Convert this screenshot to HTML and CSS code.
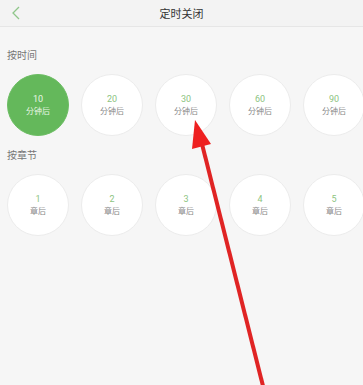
FILE: index.html
```html
<!DOCTYPE html>
<html>
    <head>
        <title>定时关闭</title>
        <link rel="stylesheet" href="styles.css">
    </head>
    <body>
        <div class="header">
            <svg class="back" width="10" height="14" viewBox="0 0 10 14"><path d="M8 1 L2 7 L8 13" fill="none" stroke="#8fc68a" stroke-width="1.3"/></svg>
            <div class="title">定时关闭</div>
        </div>

        <div class="section">
            <div class="section-title">按时间</div>
            <div class="options">
                <div class="option active"><span class="num">10</span><span class="unit">分钟后</span></div>
                <div class="option"><span class="num">20</span><span class="unit">分钟后</span></div>
                <div class="option"><span class="num">30</span><span class="unit">分钟后</span></div>
                <div class="option"><span class="num">60</span><span class="unit">分钟后</span></div>
                <div class="option"><span class="num">90</span><span class="unit">分钟后</span></div>
            </div>
        </div>

        <div class="section second">
            <div class="section-title">按章节</div>
            <div class="options">
                <div class="option"><span class="num">1</span><span class="unit">章后</span></div>
                <div class="option"><span class="num">2</span><span class="unit">章后</span></div>
                <div class="option"><span class="num">3</span><span class="unit">章后</span></div>
                <div class="option"><span class="num">4</span><span class="unit">章后</span></div>
                <div class="option"><span class="num">5</span><span class="unit">章后</span></div>
            </div>
        </div>

        <!-- red annotation arrow drawn over the screen -->
        <svg class="arrow" width="363" height="385" viewBox="0 0 363 385">
            <line x1="264" y1="390" x2="201" y2="140" stroke="#e02424" stroke-width="4"/>
            <polygon points="195,120 192,149 211,144" fill="#ee2020"/>
        </svg>
    </body>
</html>
```

FILE: styles.css
```css
body { margin: 0; background: #f6f6f6; font-family: "Noto Sans CJK SC", "Noto Sans", sans-serif; width: 363px; height: 385px; overflow: hidden; position: relative; }
.header { height: 26px; display: flex; align-items: center; justify-content: center; position: relative; background: #f3f3f3; border-bottom: 1px solid #e6e6e6; }
.back { position: absolute; left: 11px; top: 6px; }
.title { font-size: 11px; color: #333; }
.section { padding: 0 7px; }
.section-title { font-size: 10px; color: #777; padding-top: 20px; height: 16px; line-height: 16px; }
.second .section-title { padding-top: 11px; }
.options { display: flex; gap: 12px; margin-top: 11px; }
.option { width: 62px; height: 62px; flex: none; border-radius: 50%; background: #fff; border: 1px solid #ececec; box-sizing: border-box; display: flex; flex-direction: column; align-items: center; justify-content: center; }
.num { font-size: 9px; line-height: 11px; color: #8dc47f; font-family: Roboto, sans-serif; }
.unit { font-size: 8px; line-height: 11px; color: #888; }
.option.active { background: #64b85b; border-color: #6cbd63; }
.option.active .num, .option.active .unit { color: #eaf6e6; }
.arrow { position: absolute; left: 0; top: 0; }
```
